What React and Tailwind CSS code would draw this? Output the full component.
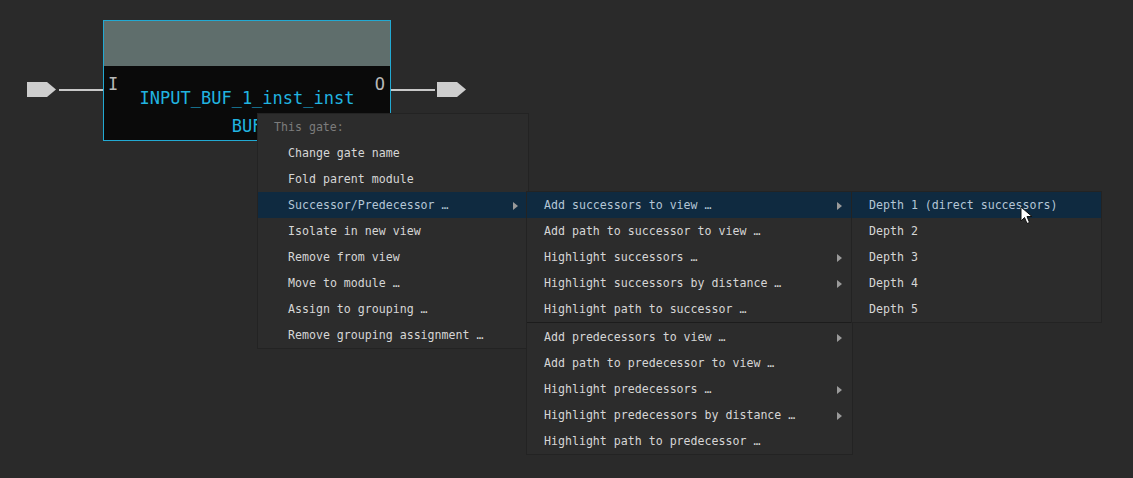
const mono = { fontFamily: '"DejaVu Sans Mono", "Liberation Mono", monospace' };

function Arrow() {
  return (
    <svg width="5" height="8" viewBox="0 0 5 8" className="shrink-0">
      <path d="M0 0 L5 4 L0 8 Z" fill="#9a9a9a" />
    </svg>
  );
}

function Item({ label, sub, active, indent = "pl-[17px]" }) {
  return (
    <div
      className={`flex h-[26px] items-center justify-between pr-[10px] pt-[2px] ${indent} ${
        active ? "bg-[#0f2a40] text-[#b4c6d6]" : "text-[#d6d6d6]"
      }`}
    >
      <span className="whitespace-pre">{label}</span>
      {sub && <Arrow />}
    </div>
  );
}

function Pin({ flip }) {
  return (
    <div className={`flex items-center ${flip ? "flex-row-reverse" : ""}`}>
      <svg width="30" height="15" viewBox="0 0 30 15">
        <path d="M0 0 H20 L29 7.5 L20 15 H0 Z" fill="#cdcdcd" />
      </svg>
      <div className="w-[2px]" />
      <div className="h-[2px] w-[44px] bg-[#c8c8c8]" />
    </div>
  );
}

export default function App() {
  const gateMenu = [
    { label: "Change gate name" },
    { label: "Fold parent module" },
    { label: "Successor/Predecessor …", sub: true, active: true },
    { label: "Isolate in new view" },
    { label: "Remove from view" },
    { label: "Move to module …" },
    { label: "Assign to grouping …" },
    { label: "Remove grouping assignment …" },
  ];
  const succ = [
    { label: "Add successors to view …", sub: true, active: true },
    { label: "Add path to successor to view …" },
    { label: "Highlight successors …", sub: true },
    { label: "Highlight successors by distance …", sub: true },
    { label: "Highlight path to successor …" },
  ];
  const pred = [
    { label: "Add predecessors to view …", sub: true },
    { label: "Add path to predecessor to view …" },
    { label: "Highlight predecessors …", sub: true },
    { label: "Highlight predecessors by distance …", sub: true },
    { label: "Highlight path to predecessor …" },
  ];
  const depths = ["Depth 1 (direct successors)", "Depth 2", "Depth 3", "Depth 4", "Depth 5"];

  return (
    <div className="relative h-[478px] w-[1133px] overflow-hidden bg-[#2a2a2a]" style={mono}>
      {/* gate node */}
      <div className="absolute left-[27px] top-[20px] flex items-start">
        <div className="mt-[62px]">
          <Pin />
        </div>
        <div className="flex h-[121px] w-[288px] flex-col border border-[#22a9d2] bg-[#0a0a0a]">
          <div className="h-[50px] bg-[#5f6e6c]" />
          <div className="relative flex-1">
            <span className="absolute left-[4px] top-[10px] text-[17px] leading-none text-[#b8b8b8]">I</span>
            <span className="absolute right-[5px] top-[10px] text-[17px] leading-none text-[#b8b8b8]">O</span>
            <div className="flex flex-col items-center pt-[18px] text-[17px] leading-[28px] text-[#21b4e0]">
              <span>INPUT_BUF_1_inst_inst</span>
              <span>BUF</span>
            </div>
          </div>
        </div>
        <div className="mt-[62px]">
          <Pin flip />
        </div>
      </div>

      {/* gate context menu */}
      <div className="absolute left-[257px] top-[113px] w-[272px] border border-[#232323] bg-[#2c2c2c] text-[11.6px]">
        <div className="flex h-[26px] items-center pl-[16px] pt-[2px] text-[#7c7c7c]">This gate:</div>
        {gateMenu.map((it) => (
          <Item key={it.label} {...it} indent="pl-[30px]" />
        ))}
      </div>

      {/* successor / predecessor submenu */}
      <div className="absolute left-[526px] top-[191px] w-[327px] border border-[#232323] bg-[#2c2c2c] text-[11.6px]">
        {succ.map((it) => (
          <Item key={it.label} {...it} />
        ))}
        <div className="mb-[1px] h-px bg-[#1c1c1c]" />
        {pred.map((it) => (
          <Item key={it.label} {...it} />
        ))}
      </div>

      {/* depth submenu */}
      <div className="absolute left-[851px] top-[191px] w-[251px] border border-[#232323] bg-[#2c2c2c] text-[11.6px]">
        {depths.map((d, i) => (
          <Item key={d} label={d} active={i === 0} />
        ))}
      </div>

      {/* mouse cursor */}
      <svg className="absolute left-[1020px] top-[206px]" width="14" height="20" viewBox="0 0 14 20">
        <path d="M1 1 L1 15 L4.5 11.5 L7 17.5 L9.5 16.5 L7 10.5 L12 10.5 Z" fill="#ffffff" stroke="#111" strokeWidth="1" />
      </svg>
    </div>
  );
}
